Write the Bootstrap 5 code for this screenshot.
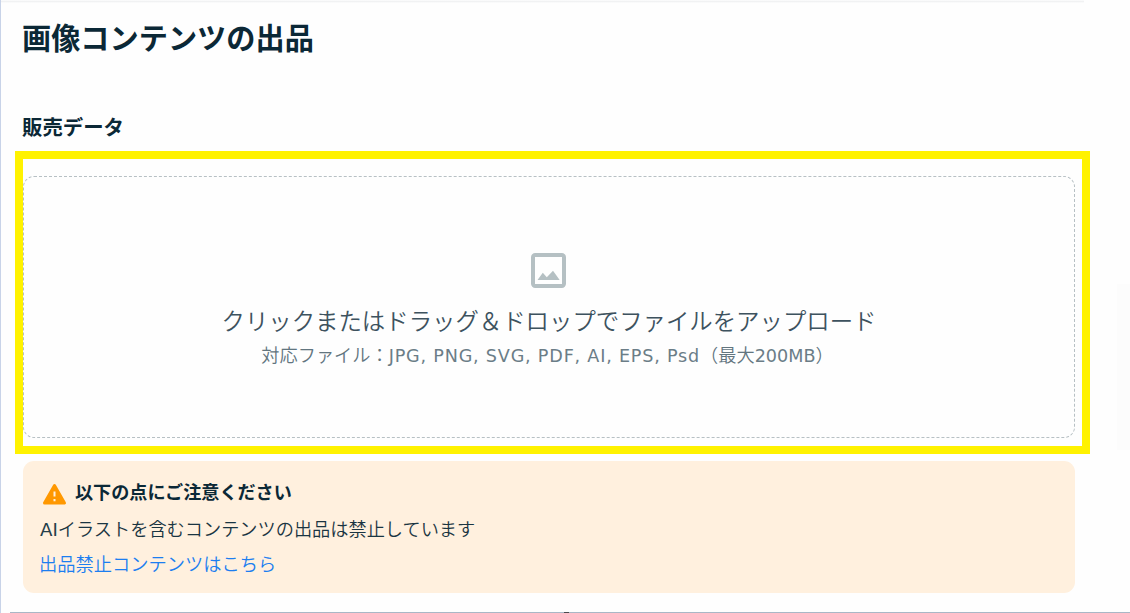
<!DOCTYPE html>
<html lang="ja">
<head>
  <meta charset="UTF-8" />
  <meta name="viewport" content="width=device-width, initial-scale=1" />
  <title>画像コンテンツの出品</title>
  <link href="https://cdn.jsdelivr.net/npm/bootstrap@5.3.3/dist/css/bootstrap.min.css" rel="stylesheet">
  <style>
    body {
      font-family: "DejaVu Sans", "Noto Sans CJK JP", sans-serif;
      color: #0b2836;
      background-color: #fefefe;
    }
    .jp {
      font-family: "Noto Sans CJK JP", sans-serif;
    }
    .page {
      height: 613px;
      border-left: 1px solid #c8d3e8;
    }
    .top-line {
      width: 1083px;
      height: 3px;
      background: linear-gradient(#fefefe, #f1f2f3, #fefefe);
    }
    .page-title {
      height: 40px;
      margin: 13px 0 0 21px;
      font-size: 29.2px;
      line-height: 40px;
    }
    .section-title {
      height: 30px;
      margin: 55px 0 0 21px;
      font-size: 20.4px;
      line-height: 30px;
    }
    .highlight {
      width: 1075px;
      height: 303px;
      margin: 10px 0 0 14px;
      padding: 17px 7px 8px 0;
      border: 8px solid #fff200;
    }
    .drop-area {
      border: 1px dashed #b7c0c4;
      border-radius: 11px;
      padding-top: 76px;
    }
    .drop-icon {
      margin-right: 2px;
    }
    .drop-title {
      height: 34px;
      margin-top: 17px;
      font-size: 23.4px;
      font-weight: 350;
      line-height: 34px;
      color: #3d525e;
    }
    .drop-hint {
      height: 26px;
      margin: 4px 3px 0 0;
      font-size: 18.2px;
      font-weight: 350;
      line-height: 26px;
      color: #62757f;
    }
    .drop-hint .latin {
      font-size: 17.6px;
      font-weight: 400;
      color: #6b7d87;
    }
    .drop-hint .formats {
      letter-spacing: 0.8px;
    }
    .notice {
      width: 1052px;
      height: 132px;
      margin: 7px 0 0 22px;
      padding: 17px 17px 0;
      border-radius: 11px;
      background-color: #fff0de;
    }
    .notice-title {
      height: 28px;
      font-size: 18.1px;
      line-height: 28px;
    }
    .notice-title span {
      margin: -1px 0 0 7px;
    }
    .notice-text {
      height: 28px;
      margin-top: 10px;
      font-size: 18.2px;
      font-weight: 350;
      line-height: 28px;
      color: #1a3542;
    }
    .notice-text .latin {
      font-weight: 400;
      color: #243e4a;
    }
    .notice-link {
      height: 28px;
      margin-top: 5px;
      margin-left: -1px;
      font-size: 18.25px;
      font-weight: 350;
      line-height: 28px;
      color: #1c7ef0;
    }
    .bottom-line {
      height: 1px;
      margin-left: 9px;
      background: linear-gradient(90deg, #a9b7c6 554px, #4a4a4e 554px, #4a4a4e 559px, #a9b7c6 559px);
    }
    .side-shade {
      left: 1117px;
      top: 284px;
      width: 13px;
      height: 166px;
      background-color: #fcfcfc;
    }
  </style>
</head>
<body>
  <div class="page d-flex flex-column overflow-hidden">
    <div class="top-line"></div>
    <h1 class="page-title jp fw-bold text-nowrap">画像コンテンツの出品</h1>
    <h2 class="section-title jp fw-bold text-nowrap">販売データ</h2>

    <div class="highlight d-flex">
      <div class="drop-area flex-fill d-flex flex-column align-items-center text-nowrap">
        <svg class="drop-icon" width="35" height="35" viewBox="0 0 35 35">
          <rect x="2" y="2" width="31" height="31" rx="2.2" fill="none" stroke="#b5c0c3" stroke-width="4" />
          <path d="M6.500 27 11.800 19.800l4 4.400 6.200-6.400 6.700 9.200z" fill="#b5c0c3" />
        </svg>
        <div class="drop-title">クリックまたはドラッグ＆ドロップでファイルをアップロード</div>
        <div class="drop-hint">対応ファイル：<span class="latin formats">JPG, PNG, SVG, PDF, AI, EPS, Psd</span>（最大<span class="latin">200MB</span>）</div>
      </div>
    </div>

    <div class="notice">
      <div class="notice-title jp d-flex fw-bold text-nowrap">
        <svg class="mt-1" width="28" height="24" viewBox="0 0 28 24">
          <path d="M14.500 3.500 24.500 21H4.500z" fill="#ff9800" stroke="#ff9800" stroke-width="3" stroke-linejoin="round" />
          <path d="M14.500 9.500v5M14.500 17v2.200" stroke="#fff0de" stroke-width="2" />
        </svg>
        <span>以下の点にご注意ください</span>
      </div>
      <div class="notice-text text-nowrap"><span class="latin">AI</span>イラストを含むコンテンツの出品は禁止しています</div>
      <div><a class="notice-link d-inline-block text-decoration-none jp" href="#">出品禁止コンテンツはこちら</a></div>
    </div>
    <div class="bottom-line mt-auto"></div>
  </div>
  <div class="side-shade position-absolute"></div>

  <script src="https://cdn.jsdelivr.net/npm/bootstrap@5.3.3/dist/js/bootstrap.bundle.min.js"></script>
</body>
</html>
